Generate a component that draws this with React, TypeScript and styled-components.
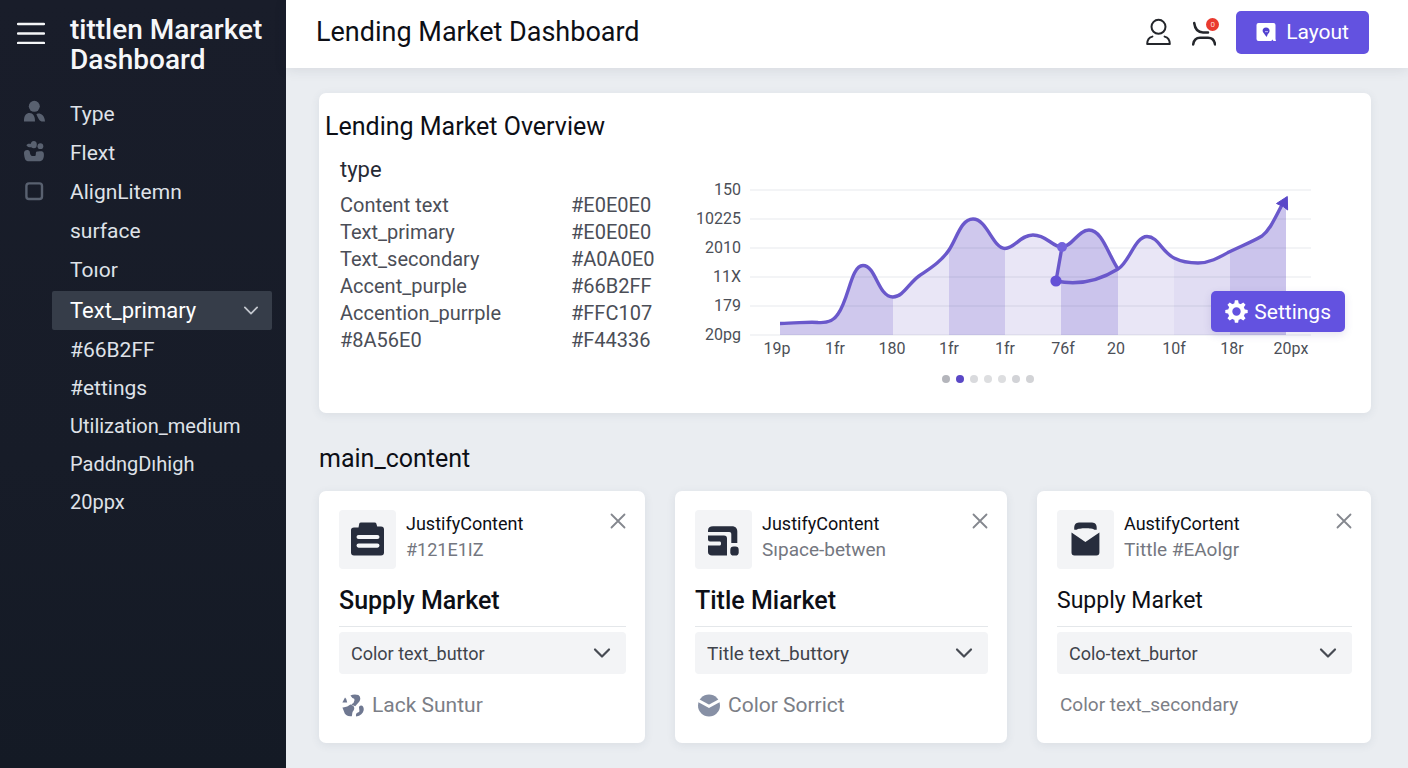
import React from "react";
import styled, { createGlobalStyle } from "styled-components";

const GlobalStyle = createGlobalStyle`
  *, *::before, *::after { box-sizing: border-box; }
  body {
    margin: 0;
    font-family: Roboto, "Liberation Sans", sans-serif;
    color: #0d0f16;
    background: #eaedf1;
  }
  h1, h2, h3, p, ul { margin: 0; padding: 0; }
  ul { list-style: none; }
  button, select { font: inherit; color: inherit; border: 0; background: none; padding: 0; cursor: pointer; }
  a { color: inherit; text-decoration: none; }
  svg { display: block; flex: none; }
`;

const Shell = styled.div`
  display: grid;
  grid-template-columns: 286px minmax(0, 1fr);
  min-height: 100vh;
`;

/* ---------- sidebar ---------- */

const Sidebar = styled.aside`
  background: linear-gradient(180deg, #191d2a 0%, #171c28 60%, #141a25 100%);
  color: #dfe2e8;
`;

const Brand = styled.div`
  display: flex;
  align-items: flex-start;
  gap: 25px;
  padding: 15px 0 0 17px;
`;

const MenuButton = styled.button`
  margin-top: 7px;
  color: #f4f5f7;
`;

const BrandName = styled.p`
  font-size: 28px;
  line-height: 30px;
  font-weight: 500;
  color: #f6f7f9;
`;

const SideNav = styled.nav`
  margin-top: 19px;
`;

const NavLink = styled.a<{ $height: number; $size: number }>`
  display: flex;
  align-items: center;
  gap: 25px;
  height: ${(p) => p.$height}px;
  padding-left: 23px;
  font-size: ${(p) => p.$size}px;
`;

const NavIcon = styled.span`
  width: 22px;
  color: #596170;
`;

const NavToggle = styled.button`
  display: flex;
  align-items: center;
  justify-content: space-between;
  width: calc(100% - 66px);
  height: 39px;
  margin: 2px 14px 1px 52px;
  padding: 0 14px 0 18px;
  border-radius: 2px;
  background: #363d49;
  color: #fff;
  font-size: 22px;

  svg { color: #c3c7ce; }
`;

/* ---------- header ---------- */

const Page = styled.div`
  display: flex;
  flex-direction: column;
`;

const TopBar = styled.header`
  display: flex;
  align-items: center;
  height: 68px;
  padding: 0 39px 4px 30px;
  background: #fff;
  box-shadow: 0 2px 12px rgba(40, 50, 70, 0.1);
`;

const PageTitle = styled.h1`
  flex: 1;
  font-size: 27px;
  line-height: 32px;
  font-weight: 400;
`;

const IconButton = styled.button`
  position: relative;
  margin-right: 20px;
  color: #24262b;
`;

const Badge = styled.span`
  position: absolute;
  top: 0;
  right: -3px;
  width: 13px;
  height: 13px;
  border-radius: 50%;
  background: #e93a2f;
  color: #ffd9d5;
  font-size: 8px;
  line-height: 13px;
  text-align: center;
`;

const PrimaryButton = styled.button`
  display: flex;
  align-items: center;
  border-radius: 5px;
  background: #6352e0;
  color: #fff;
  font-size: 21px;
`;

const LayoutButton = styled(PrimaryButton)`
  gap: 10px;
  height: 43px;
  padding: 0 20px;
`;

/* ---------- content ---------- */

const Content = styled.main`
  flex: 1;
  padding: 25px 37px 25px 33px;
`;

const Panel = styled.section`
  border-radius: 7px;
  background: #fff;
  box-shadow: 0 2px 10px rgba(60, 75, 100, 0.09);
`;

const Overview = styled(Panel)`
  padding: 19px 20px 30px 6px;
`;

const OverviewTitle = styled.h2`
  font-size: 25px;
  line-height: 30px;
  font-weight: 400;
`;

const OverviewBody = styled.div`
  display: flex;
`;

const TokenList = styled.div`
  flex: 0 0 365px;
  padding: 14px 0 0 15px;
`;

const TokenTable = styled.table`
  border-collapse: collapse;
  font-size: 20px;
  line-height: 27px;
  color: #4b4e57;

  caption {
    padding-bottom: 8px;
    text-align: left;
    font-size: 22px;
    line-height: 28px;
    color: #262a35;
  }
  th, td { padding: 0; font-weight: 400; text-align: left; }
  th { width: 231px; }
`;

const ChartColumn = styled.div`
  flex: 1;
  min-width: 0;
  padding-top: 34px;
`;

const ChartFrame = styled.div`
  position: relative;

  > svg { width: 100%; height: auto; }
`;

const AxisText = styled.text`
  font-size: 16px;
  fill: #4c4f57;
`;

const SettingsButton = styled(PrimaryButton)`
  position: absolute;
  right: 6px;
  bottom: 34px;
  gap: 6px;
  height: 41px;
  padding: 0 14px;
  box-shadow: 0 3px 8px rgba(70, 60, 150, 0.14);
`;

const Pager = styled.div`
  display: flex;
  justify-content: center;
  gap: 6px;
  margin-top: 9px;
  padding-right: 66px;
`;

const Dot = styled.button<{ $color: string }>`
  width: 8px;
  height: 8px;
  border-radius: 50%;
  background: ${(p) => p.$color};
`;

const SectionTitle = styled.h2`
  margin: 31px 0 17px;
  font-size: 25px;
  line-height: 30px;
  font-weight: 400;
`;

const CardGrid = styled.div`
  display: grid;
  grid-template-columns: 326fr 332fr 334fr;
  gap: 30px;
`;

const Card = styled(Panel)`
  padding: 19px 19px 24px 20px;
`;

const CardHead = styled.div`
  display: flex;
  align-items: flex-start;
  gap: 10px;
`;

const Tile = styled.div`
  width: 57px;
  height: 59px;
  border-radius: 4px;
  background: #f3f4f6;
  color: #272d3d;
`;

const CardMeta = styled.div`
  flex: 1;
  padding-top: 1px;
  line-height: 26px;
`;

const MetaName = styled.p`
  font-size: 18px;
`;

const MetaValue = styled.p<{ $size: number }>`
  font-size: ${(p) => p.$size}px;
  color: #747780;
`;

const CloseButton = styled.button`
  margin-top: 3px;
  color: #84878e;
`;

const CardTitle = styled.h3<{ $size: number; $weight: number }>`
  margin-top: 17px;
  padding-bottom: 10px;
  border-bottom: 1px solid #e4e7ea;
  font-size: ${(p) => p.$size}px;
  line-height: 30px;
  font-weight: ${(p) => p.$weight};
`;

const SelectBox = styled.div<{ $size: number }>`
  position: relative;
  margin-top: 5px;

  select {
    display: block;
    appearance: none;
    width: 100%;
    height: 42px;
    padding: 0 44px 0 12px;
    border-radius: 4px;
    background: #f3f4f6;
    color: #40434b;
    font-size: ${(p) => p.$size}px;
  }
  svg {
    position: absolute;
    top: 17px;
    right: 16px;
    color: #474b53;
    pointer-events: none;
  }
`;

const CardFoot = styled.p<{ $size: number }>`
  display: flex;
  align-items: center;
  gap: 8px;
  margin-top: 17px;
  padding-left: 3px;
  font-size: ${(p) => p.$size}px;
  line-height: 28px;
  color: #7b7e86;
`;

/* ---------- icons ---------- */

const PersonIcon = () => (
  <svg width="22" height="22" viewBox="0 0 22 22" fill="currentColor" overflow="visible" aria-hidden>
    <circle cx="11.3" cy="3.3" r="5.5" />
    <path d="M1 18.5V17C1 12.5 3.5 10 6.5 10C10 10 12 13 12 18.5Z" />
    <path d="M13.4 11.6C14.5 9.6 21.5 10 22 18.5H18.6C16 18 15 14.4 13.4 11.6Z" />
  </svg>
);

const PawIcon = () => (
  <svg width="22" height="22" viewBox="0 0 22 22" fill="currentColor" overflow="visible" aria-hidden>
    <g transform="translate(0 -1.5)">
      <path d="M3.5 5C3.5 3.2 6.5 3 8.5 3.6V6.8C6.5 7 4.5 6.6 3.5 5Z" />
      <ellipse cx="10.8" cy="4.2" rx="3" ry="3.6" />
      <circle cx="17.4" cy="5.7" r="2.9" />
      <path d="M1 13C0.6 9 6 8.6 6.8 11.2C6.9 13.2 7.6 15.4 9 15.4H12C13.6 15.4 12 11 14 11C17 11.4 20 9.6 20.8 13C21.4 17.4 19.6 20.7 17 20.7H5C2.2 20.7 1.4 17.4 1 13Z" />
    </g>
  </svg>
);

const SquareIcon = () => (
  <svg width="22" height="22" viewBox="0 0 22 22" fill="none" stroke="currentColor" strokeWidth="2.4" aria-hidden>
    <rect x="3.4" y="2.4" width="15.6" height="15.6" rx="2.6" />
  </svg>
);

const BurgerIcon = () => (
  <svg width="28" height="22" viewBox="0 0 28 22" stroke="currentColor" strokeWidth="2.4" strokeLinecap="round" aria-hidden>
    <path d="M1 2H27M1 11.5H27M1 21H27" />
  </svg>
);

const Chevron = ({ width, stroke }: { width: number; stroke: number }) => (
  <svg width={width} height={width / 2} viewBox="0 0 16 8" fill="none" stroke="currentColor" strokeWidth={stroke} strokeLinecap="round" strokeLinejoin="round" overflow="visible" aria-hidden>
    <path d="M1 0.5L8 7.5L15 0.5" />
  </svg>
);

const UserIcon = () => (
  <svg width="26" height="28" viewBox="0 0 26 28" fill="none" stroke="currentColor" strokeWidth="2" strokeLinecap="round" strokeLinejoin="round" aria-hidden>
    <circle cx="12.5" cy="8.8" r="7" />
    <path d="M6.4 18.6C3 19.4 1.2 22 1.2 26H23.8C23.8 22 22 19.4 18.6 18.6" />
  </svg>
);

const AlertsIcon = () => (
  <svg width="24" height="28" viewBox="0 0 24 28" fill="none" stroke="currentColor" strokeWidth="2.5" strokeLinecap="round" aria-hidden>
    <path d="M2.2 5C3 11 6 14.4 11 14.4H16" />
    <path d="M1.2 26.4C1.8 21.8 4 19.7 8 19.7H16C20 19.7 22.4 21.8 23 26.4" />
  </svg>
);

const LayoutIcon = () => (
  <svg width="20" height="18" viewBox="0 0 20 18" aria-hidden>
    <path d="M2.5 0H17.5Q19.5 0 19.5 2V16L20 18H2.5Q0.5 18 0.5 16V2Q0.5 0 2.5 0Z" fill="#fff" />
    <path d="M10 4.4C12.3 4.4 13.6 6 13.6 7.8C13.6 9.6 12.2 10.4 11.6 11.6L10.8 14L9 12C8.6 10.6 6.6 9.8 6.6 7.8C6.6 6 7.8 4.4 10 4.4Z" fill="#5140cf" />
    <path d="M9 8.6H12" stroke="#b4aaf2" strokeWidth="1.2" />
    <path d="M15.4 18L16.2 16.6L17.6 18Z" fill="#6352e0" />
  </svg>
);

const GearIcon = () => (
  <svg width="23" height="23" viewBox="0 0 23 23" fill="#fff" aria-hidden>
    {[0, 45, 90, 135].map((angle) => (
      <path key={angle} d="M9.2 4L9.9 0.3H13.1L13.8 4V6H9.2ZM9.2 17V19L9.9 22.7H13.1L13.8 19V17Z" transform={`rotate(${angle} 11.5 11.5)`} />
    ))}
    <circle cx="11.5" cy="11.5" r="6.4" fill="none" stroke="#fff" strokeWidth="4.4" />
  </svg>
);

const CloseIcon = () => (
  <svg width="16" height="16" viewBox="0 0 16 16" stroke="currentColor" strokeWidth="1.8" strokeLinecap="round" aria-hidden>
    <path d="M1.5 1.5L14.5 14.5M14.5 1.5L1.5 14.5" />
  </svg>
);

const BriefcaseGlyph = () => (
  <svg width="57" height="59" viewBox="0 0 57 59" fill="currentColor" aria-hidden>
    <path d="M19.5 17.5L20.3 13.6Q20.6 12.4 22 12.4H35.6Q37 12.4 37.3 13.6L38.2 16.6H42Q45 16.6 45 19.6V42.4Q45 45.4 42 45.4H15Q12 45.4 12 42.4V20Q12 17.5 15 17.5Z" />
    <path d="M19.6 27H38.4M19.6 35.6H38.4" stroke="#f6f7f9" strokeWidth="4.2" strokeLinecap="round" />
  </svg>
);

const BlocksGlyph = () => (
  <svg width="57" height="59" viewBox="0 0 57 59" fill="currentColor" aria-hidden>
    <path d="M13 22V20.5C13 17.5 15 16.3 18 16.3H37C40.5 16.3 42.3 18.5 42.3 21.5V33H36.3V24.4C36.3 22.8 35.6 22 34.3 22Z" />
    <path d="M13 25.5H29C31 25.5 32 26.8 32 28.5V45.5H17C14.5 45.5 13 44 13 42V35.6H25C26.4 35.6 26.4 31.6 25 31.6H15Q13 31.6 13 29.6Z" />
    <rect x="35.3" y="36.6" width="8.4" height="9" rx="3.4" />
  </svg>
);

const EnvelopeGlyph = () => (
  <svg width="57" height="59" viewBox="0 0 57 59" fill="currentColor" aria-hidden>
    <path d="M14.5 22.6L28.4 32L42.4 22.6V42.6Q42.4 45.6 39.4 45.6H17.5Q14.5 45.6 14.5 42.6Z" />
    <path d="M17.3 19.8C16.8 14.4 18.6 12.6 22 12.4H35C38.4 12.6 40.2 14.4 39.7 19.8H37.4C35.6 17.8 21.6 17.8 19.6 19.8Z" />
  </svg>
);

const PinwheelIcon = () => (
  <svg width="22" height="23" viewBox="0 0 22 23" fill="#6f7891" aria-hidden>
    <path d="M0.4 8.6L3 3.6Q4.4 4.4 5.2 8.4Z" />
    <path d="M8.4 1.6Q12 -0.4 16.4 1Q19.6 3.4 17.4 7.4L13.2 12.2L9.2 10.6Q13.4 8 12.2 4.8Q10 4.4 8.4 1.6Z" />
    <path d="M0.4 13.4C4 13.6 6.4 12 8.4 10.6C12 11.4 13.2 14 11.6 16.6C9.8 18 10.6 20 9.8 22.2C6 22.8 2.6 21 2 17.6Z" />
    <path d="M17.2 12.4C19.6 10 22.4 12.4 21.6 16.4C21 19.4 18.6 21.6 14.2 22.4C13.4 20.4 14.4 18.8 16.4 18.2C18.6 17.4 16.4 14.4 17.2 12.4Z" />
  </svg>
);

const CheckDiscIcon = () => (
  <svg width="22" height="23" viewBox="0 0 22 23" aria-hidden>
    <circle cx="11" cy="11.5" r="11" fill="#8790a5" />
    <path d="M-0.5 6L11 12.4L22.5 6" fill="none" stroke="#fff" strokeWidth="3" />
  </svg>
);

/* ---------- chart ---------- */

const LINE =
  "C110 147 120 145.5 128 146.5C136 147 143 146 148 138C159 123 161 89.5 173 89.5C186 89.5 188 121 203 121C213 121 219 107 229 100C239 93 251 86 259 74C267 62 271 43 283 43C297 43 303 72.5 315 72.5C325 72.5 330 59 343 59C357 59 362 71 372 71C382 71 388 54 399 54C412 54 418 78 428 93";
const TAIL =
  "C439 87 445 60.5 457 60.5C468 60.5 472 76 484 82C492 86 500 87 508 87C520 87 530 81 539 76C549 71 562 66 572 60C580 54 585 42 593 27";
const AREA = `M90 147.5${LINE}${TAIL}L596 25V159H90Z`;

const BANDS = [
  { x: 90, w: 113, fill: "#cfc8ed" },
  { x: 203, w: 56, fill: "#e9e6f6" },
  { x: 259, w: 56, fill: "#cfc8ed" },
  { x: 315, w: 56, fill: "#e9e6f6" },
  { x: 371, w: 57, fill: "#cbc4ec" },
  { x: 428, w: 56, fill: "#e9e6f6" },
  { x: 484, w: 56, fill: "#e1ddf3" },
  { x: 540, w: 56, fill: "#cbc4ec" },
];

const Y_LABELS = ["150", "10225", "2010", "11X", "179", "20pg"];
const X_LABELS: [number, string][] = [
  [87, "19p"], [145, "1fr"], [202, "180"], [259, "1fr"], [315, "1fr"],
  [373, "76f"], [426, "20"], [484, "10f"], [542, "18r"], [601, "20px"],
];

const OverviewChart = () => (
  <svg viewBox="0 0 661 190" role="img" aria-label="Lending market overview">
    <clipPath id="area"><path d={AREA} /></clipPath>
    <g clipPath="url(#area)">
      {BANDS.map((b) => (
        <rect key={b.x} x={b.x} y="14" width={b.w} height="145" fill={b.fill} />
      ))}
    </g>
    <path d="M371 71L366 105C390 110 410 103 428 93C418 78 412 54 399 54C388 54 382 71 371 71Z" fill="#cbc4ec" />
    {Y_LABELS.map((label, i) => (
      <g key={label}>
        <path d={`M60 ${14 + i * 29}H621`} stroke="#3c4660" strokeOpacity="0.12" strokeWidth="1" />
        <AxisText x="51" y={19 + i * 29} textAnchor="end">{label}</AxisText>
      </g>
    ))}
    {X_LABELS.map(([x, label]) => (
      <AxisText key={x} x={x} y="178" textAnchor="middle">{label}</AxisText>
    ))}
    <g fill="none" stroke="#6a58cb" strokeWidth="3.4" strokeLinejoin="round">
      <path d={`M90 147.5${LINE}`} />
      <path d={`M372 71L366 105C390 110 412 103 428 93${TAIL}`} />
    </g>
    <circle cx="372" cy="71" r="5" fill="#7463dc" />
    <circle cx="366" cy="105" r="5.6" fill="#6451d6" />
    <path d="M586.5 27.5L597.3 20.5L597.6 34L593.4 30.6Z" fill="#5a47c8" stroke="#5a47c8" strokeLinejoin="round" />
  </svg>
);

/* ---------- data ---------- */

const PRIMARY_NAV = [
  { label: "Type", icon: <PersonIcon /> },
  { label: "Flext", icon: <PawIcon /> },
  { label: "AlignLitemn", icon: <SquareIcon /> },
  { label: "surface", icon: null },
  { label: "Toıor", icon: null },
];

const SUB_NAV = [
  { label: "#66B2FF", size: 21 },
  { label: "#ettings", size: 21 },
  { label: "Utilization_medium", size: 20 },
  { label: "PaddngDıhigh", size: 20 },
  { label: "20ppx", size: 20 },
];

const TOKENS = [
  ["Content text", "#E0E0E0"],
  ["Text_primary", "#E0E0E0"],
  ["Text_secondary", "#A0A0E0"],
  ["Accent_purple", "#66B2FF"],
  ["Accention_purrple", "#FFC107"],
  ["#8A56E0", "#F44336"],
];

const DOTS = ["#b4b5bb", "#5a48c6", "#d9dadd", "#dddee0", "#dddee0", "#d2d3d7", "#d2d3d6"];

const MARKETS = [
  { glyph: <BriefcaseGlyph />, name: "JustifyContent", value: "#121E1IZ", valueSize: 18, title: "Supply Market", titleSize: 25, titleWeight: 500, option: "Color text_buttor", optionSize: 18, foot: "Lack Suntur", footIcon: <PinwheelIcon />, footSize: 21 },
  { glyph: <BlocksGlyph />, name: "JustifyContent", value: "Sıpace-betwen", valueSize: 19, title: "Title Miarket", titleSize: 25, titleWeight: 500, option: "Title text_buttory", optionSize: 19, foot: "Color Sorrict", footIcon: <CheckDiscIcon />, footSize: 21 },
  { glyph: <EnvelopeGlyph />, name: "AustifyCortent", value: "Tittle #EAolgr", valueSize: 19, title: "Supply Market", titleSize: 23, titleWeight: 400, option: "Colo-text_burtor", optionSize: 18, foot: "Color text_secondary", footIcon: null, footSize: 19 },
];

export default function App() {
  return (
    <>
      <GlobalStyle />
      <Shell>
        <Sidebar>
          <Brand>
            <MenuButton aria-label="Menu"><BurgerIcon /></MenuButton>
            <BrandName>tittlen Mararket<br />Dashboard</BrandName>
          </Brand>
          <SideNav>
            <ul>
              {PRIMARY_NAV.map((item) => (
                <li key={item.label}>
                  <NavLink href="#" $height={39} $size={21}>
                    <NavIcon>{item.icon}</NavIcon>
                    {item.label}
                  </NavLink>
                </li>
              ))}
            </ul>
            <NavToggle aria-expanded="true">
              Text_primary
              <Chevron width={14} stroke={2} />
            </NavToggle>
            <ul>
              {SUB_NAV.map((item) => (
                <li key={item.label}>
                  <NavLink href="#" $height={38} $size={item.size}>
                    <NavIcon />
                    {item.label}
                  </NavLink>
                </li>
              ))}
            </ul>
          </SideNav>
        </Sidebar>

        <Page>
          <TopBar>
            <PageTitle>Lending Market Dashboard</PageTitle>
            <IconButton aria-label="Account"><UserIcon /></IconButton>
            <IconButton aria-label="Alerts">
              <AlertsIcon />
              <Badge>0</Badge>
            </IconButton>
            <LayoutButton><LayoutIcon />Layout</LayoutButton>
          </TopBar>

          <Content>
            <Overview>
              <OverviewTitle>Lending Market Overview</OverviewTitle>
              <OverviewBody>
                <TokenList>
                  <TokenTable>
                    <caption>type</caption>
                    <tbody>
                      {TOKENS.map(([name, value]) => (
                        <tr key={name}>
                          <th scope="row">{name}</th>
                          <td>{value}</td>
                        </tr>
                      ))}
                    </tbody>
                  </TokenTable>
                </TokenList>
                <ChartColumn>
                  <ChartFrame>
                    <OverviewChart />
                    <SettingsButton><GearIcon />Settings</SettingsButton>
                  </ChartFrame>
                  <Pager>
                    {DOTS.map((color, i) => (
                      <Dot key={i} $color={color} aria-label={`Slide ${i + 1}`} />
                    ))}
                  </Pager>
                </ChartColumn>
              </OverviewBody>
            </Overview>

            <SectionTitle>main_content</SectionTitle>

            <CardGrid>
              {MARKETS.map((m, i) => (
                <Card key={i}>
                  <CardHead>
                    <Tile>{m.glyph}</Tile>
                    <CardMeta>
                      <MetaName>{m.name}</MetaName>
                      <MetaValue $size={m.valueSize}>{m.value}</MetaValue>
                    </CardMeta>
                    <CloseButton aria-label="Close"><CloseIcon /></CloseButton>
                  </CardHead>
                  <CardTitle $size={m.titleSize} $weight={m.titleWeight}>{m.title}</CardTitle>
                  <SelectBox $size={m.optionSize}>
                    <select aria-label={m.title}>
                      <option>{m.option}</option>
                    </select>
                    <Chevron width={16} stroke={2.2} />
                  </SelectBox>
                  <CardFoot $size={m.footSize}>{m.footIcon}{m.foot}</CardFoot>
                </Card>
              ))}
            </CardGrid>
          </Content>
        </Page>
      </Shell>
    </>
  );
}
